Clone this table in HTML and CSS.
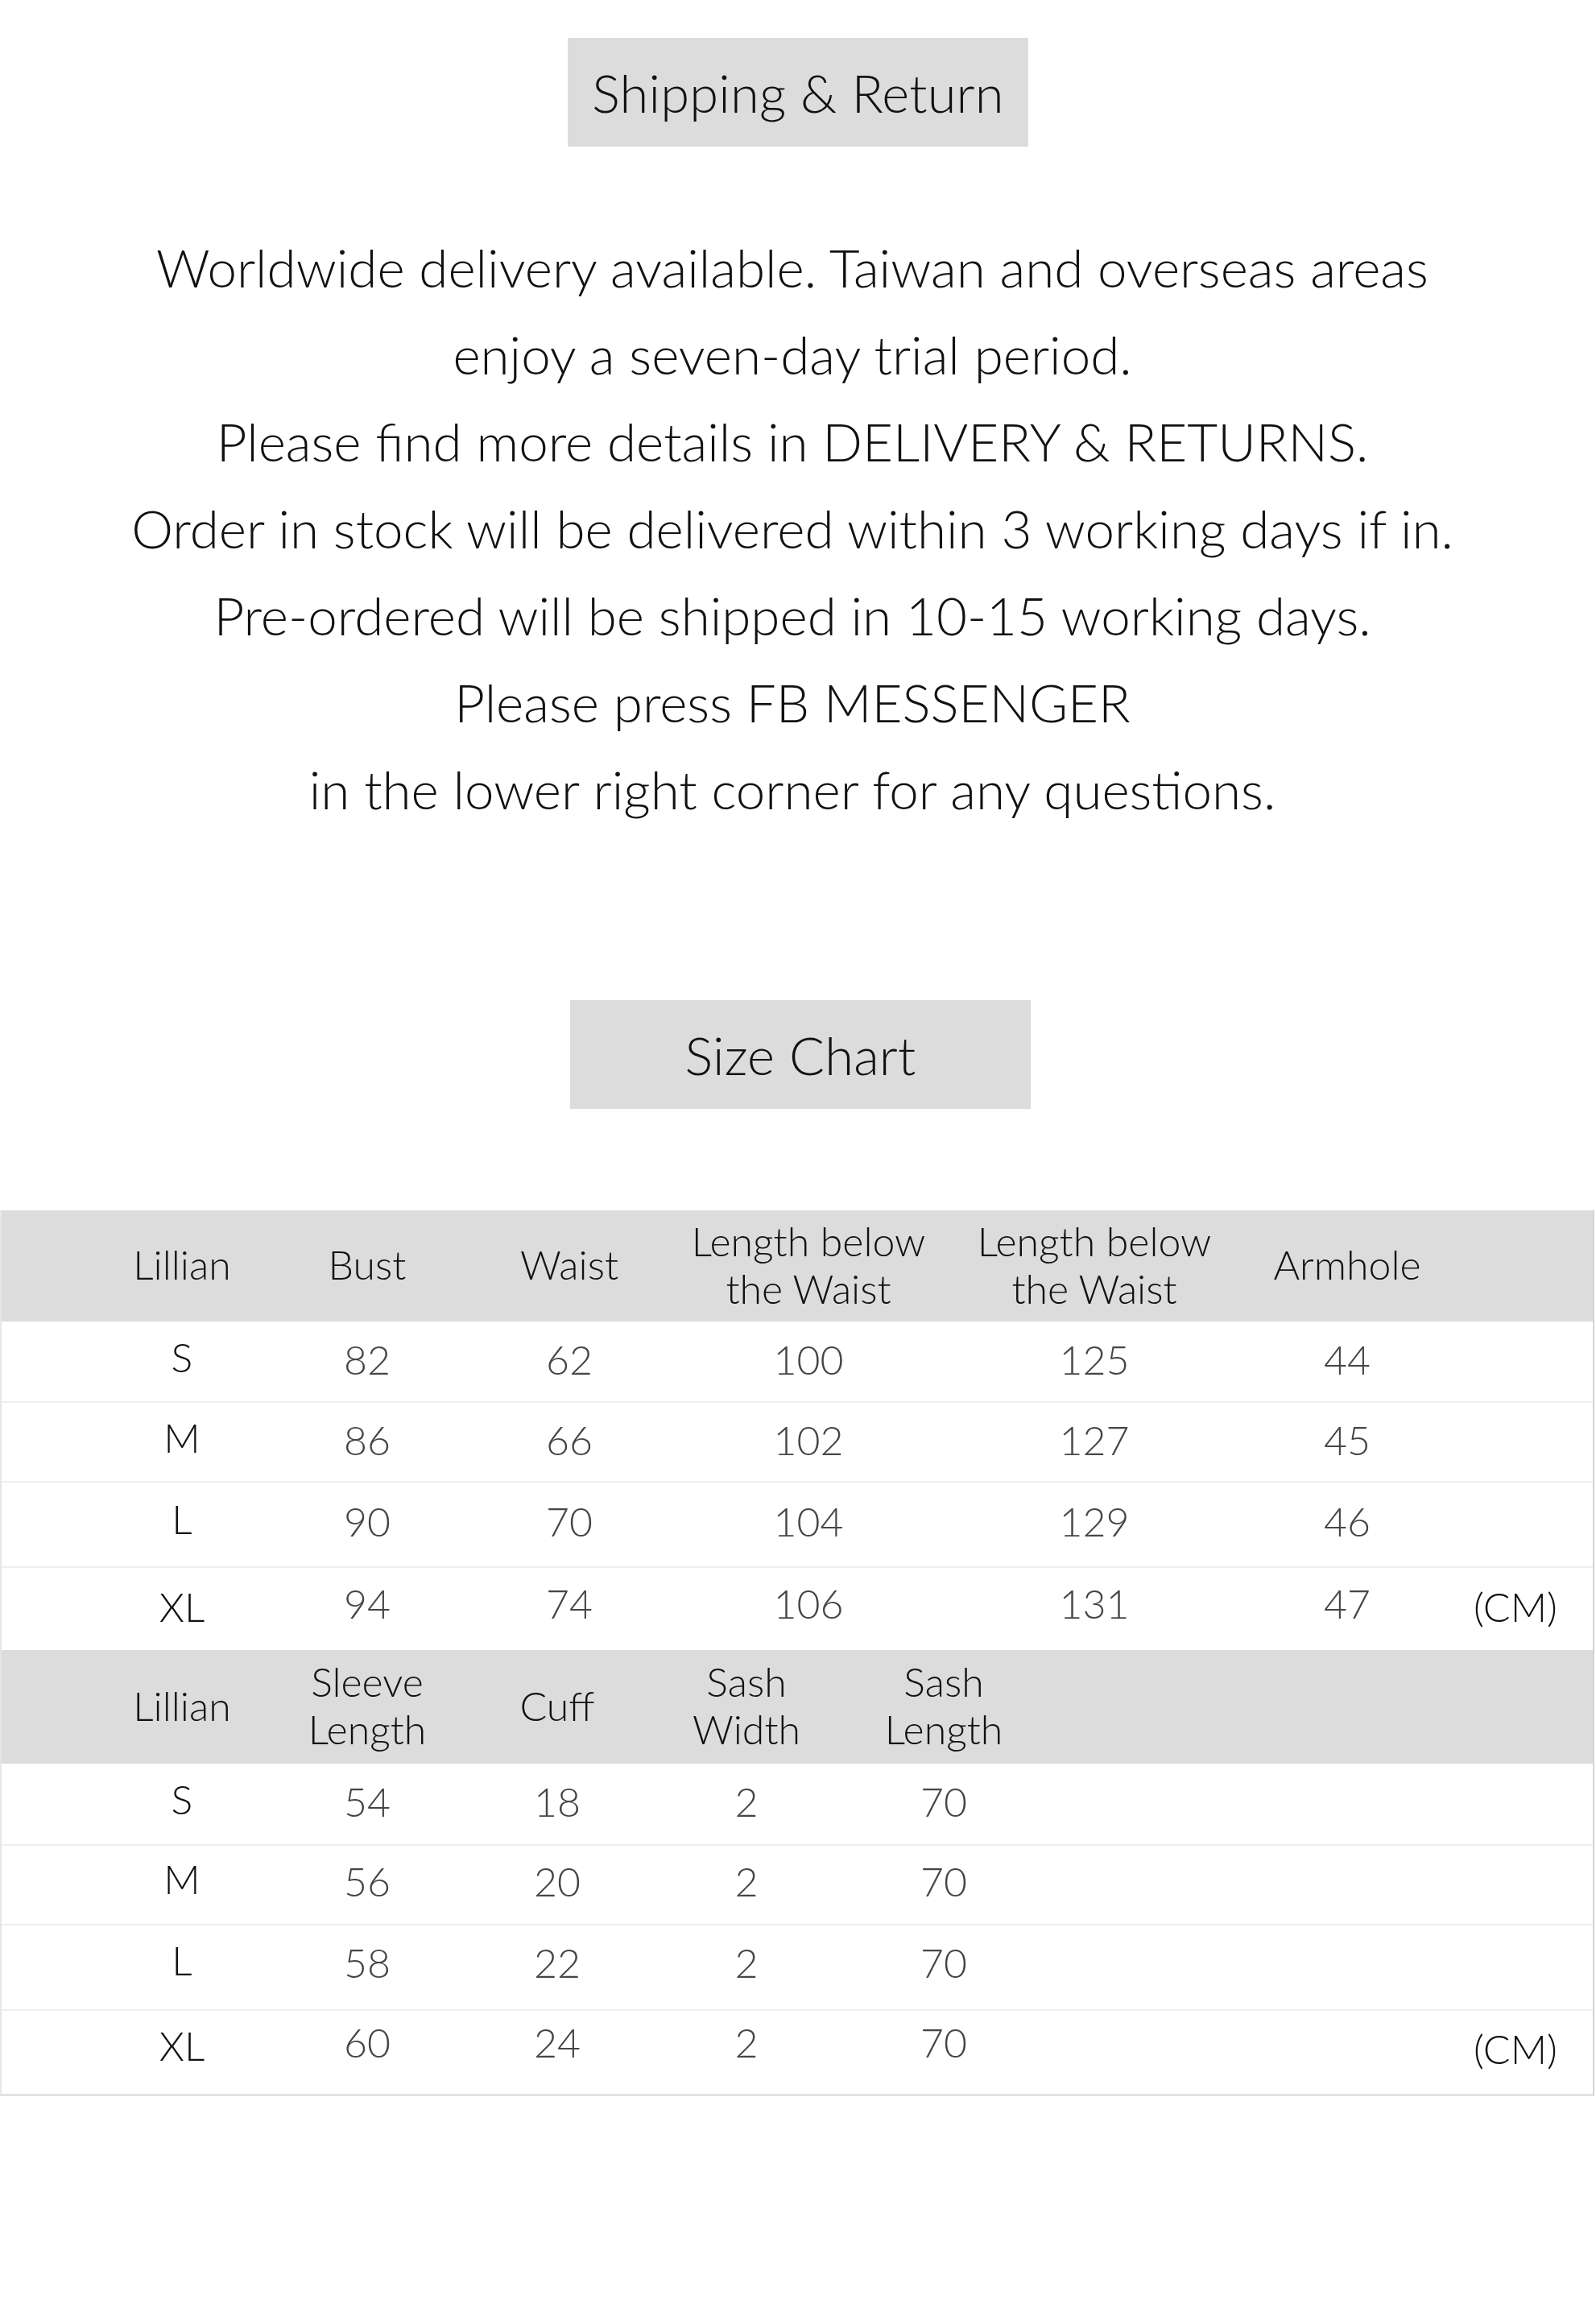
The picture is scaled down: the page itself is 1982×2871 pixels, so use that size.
FILE: index.html
```html
<!DOCTYPE html>
<html lang="en">
<head>
<meta charset="utf-8">
<title>Shipping &amp; Return / Size Chart</title>
<link rel="stylesheet" href="styles.css">
</head>
<body>
<main class="page">
  <section class="section">
    <h2 class="title-box">Shipping &amp; Return</h2>
    <p class="notice">
      Worldwide delivery available. Taiwan and overseas areas<br>
      enjoy a seven-day trial period.<br>
      Please find more details in DELIVERY &amp; RETURNS.<br>
      Order in stock will be delivered within 3 working days if in.<br>
      Pre-ordered will be shipped in 10-15 working days.<br>
      Please press FB MESSENGER<br>
      in the lower right corner for any questions.
    </p>
  </section>

  <section class="section chart-section">
    <h2 class="title-box">Size Chart</h2>
  </section>

  <div class="chart">
    <div class="row head t1 h1">
      <div class="cell first">Lillian</div>
      <div class="cell">Bust</div>
      <div class="cell">Waist</div>
      <div class="cell">Length below<br>the Waist</div>
      <div class="cell">Length below<br>the Waist</div>
      <div class="cell">Armhole</div>
      <div class="cell"></div>
    </div>
    <div class="row t1 r99 a">
      <div class="cell first size">S</div>
      <div class="cell">82</div><div class="cell">62</div><div class="cell">100</div><div class="cell">125</div><div class="cell">44</div><div class="cell"></div>
    </div>
    <div class="row t1 r99 a">
      <div class="cell first size">M</div>
      <div class="cell">86</div><div class="cell">66</div><div class="cell">102</div><div class="cell">127</div><div class="cell">45</div><div class="cell"></div>
    </div>
    <div class="row t1 r106 b">
      <div class="cell first size">L</div>
      <div class="cell">90</div><div class="cell">70</div><div class="cell">104</div><div class="cell">129</div><div class="cell">46</div><div class="cell"></div>
    </div>
    <div class="row t1 r104 c">
      <div class="cell first size">XL</div>
      <div class="cell">94</div><div class="cell">74</div><div class="cell">106</div><div class="cell">131</div><div class="cell">47</div><div class="cell unit">(CM)</div>
    </div>

    <div class="row head t2 h2">
      <div class="cell first">Lillian</div>
      <div class="cell">Sleeve<br>Length</div>
      <div class="cell">Cuff</div>
      <div class="cell">Sash<br>Width</div>
      <div class="cell">Sash<br>Length</div>
      <div class="cell"></div>
      <div class="cell"></div>
    </div>
    <div class="row t2 r100 d">
      <div class="cell first size">S</div>
      <div class="cell">54</div><div class="cell">18</div><div class="cell">2</div><div class="cell">70</div><div class="cell"></div><div class="cell"></div>
    </div>
    <div class="row t2 r99 e">
      <div class="cell first size">M</div>
      <div class="cell">56</div><div class="cell">20</div><div class="cell">2</div><div class="cell">70</div><div class="cell"></div><div class="cell"></div>
    </div>
    <div class="row t2 r106 f">
      <div class="cell first size">L</div>
      <div class="cell">58</div><div class="cell">22</div><div class="cell">2</div><div class="cell">70</div><div class="cell"></div><div class="cell"></div>
    </div>
    <div class="row t2 r105 g">
      <div class="cell first size">XL</div>
      <div class="cell">60</div><div class="cell">24</div><div class="cell">2</div><div class="cell">70</div><div class="cell"></div><div class="cell unit">(CM)</div>
    </div>
  </div>
</main>
</body>
</html>
```
FILE: styles.css
```css
* { box-sizing: border-box; }

html, body {
  margin: 0;
  padding: 0;
  background: #ffffff;
}

body {
  font-family: "Lato", "Open Sans", "Liberation Sans", sans-serif;
  font-weight: 300;
  color: #111111;
}

.page {
  width: 1982px;
  padding-top: 47px;
  padding-bottom: 270px;
}

.section {
  display: flex;
  flex-direction: column;
  align-items: center;
}

.title-box {
  margin: 0;
  width: 572px;
  height: 135px;
  background: #dcdcdc;
  display: flex;
  align-items: center;
  justify-content: center;
  font-size: 65px;
  font-weight: 300;
  color: #111111;
  letter-spacing: 0.2px;
}

.notice {
  margin: 96px 0 0 0;
  padding-right: 14px;
  text-align: center;
  font-size: 65.5px;
  line-height: 108px;
  color: #111111;
  width: 100%;
}

.chart-section {
  margin-top: 208px;
  padding-left: 6px;
}

.chart {
  margin-top: 126px;
  width: 1980px;
  border-left: 2px solid #e6e6e6;
  border-right: 2px solid #d4d4d4;
  border-bottom: 3px solid #e2e2e2;
}

.row {
  display: grid;
  align-items: center;
  border-top: 2px solid #eeeeee;
  font-size: 50px;
  line-height: 59px;
  --pd: 0px;
  --pl: 0px;
  --pu: 0px;
}

.row.t1 {
  grid-template-columns: 338px 232px 270px 324px 386px 242px 1fr;
}

.row.t2 {
  grid-template-columns: 338px 232px 240px 230px 260px 492px 1fr;
}

.row.head {
  background: #dcdcdc;
  border-top: none;
  color: #111111;
}

.row.head + .row { border-top: none; }

.h1 { height: 138px; }
.h2 { height: 141px; }
.r99 { height: 99px; }
.r100 { height: 100px; }
.r104 { height: 104px; }
.r105 { height: 105px; }
.r106 { height: 106px; }

/* per-row vertical nudges (digits / size letter / unit) */
.a { --pd: 4px;  --pl: 10px; }
.b { --pd: 8px;  --pl: 14px; }
.c { --pd: 14px; --pl: 6px;  --pu: 6px; }
.d { --pd: 6px;  --pl: 12px; }
.e { --pd: 8px;  --pl: 14px; }
.f { --pd: 12px; --pl: 18px; }
.g { --pd: 24px; --pl: 16px; --pu: 8px; }

.cell {
  text-align: center;
  color: #454545;
  padding-bottom: var(--pd);
  white-space: nowrap;
}

.head .cell {
  color: #111111;
  padding-bottom: 3px;
}

.cell.first {
  padding-left: 110px;
}

.cell.size {
  color: #111111;
  padding-bottom: var(--pl);
}

.cell.unit {
  color: #111111;
  padding-bottom: var(--pu);
  padding-right: 8px;
}
```
